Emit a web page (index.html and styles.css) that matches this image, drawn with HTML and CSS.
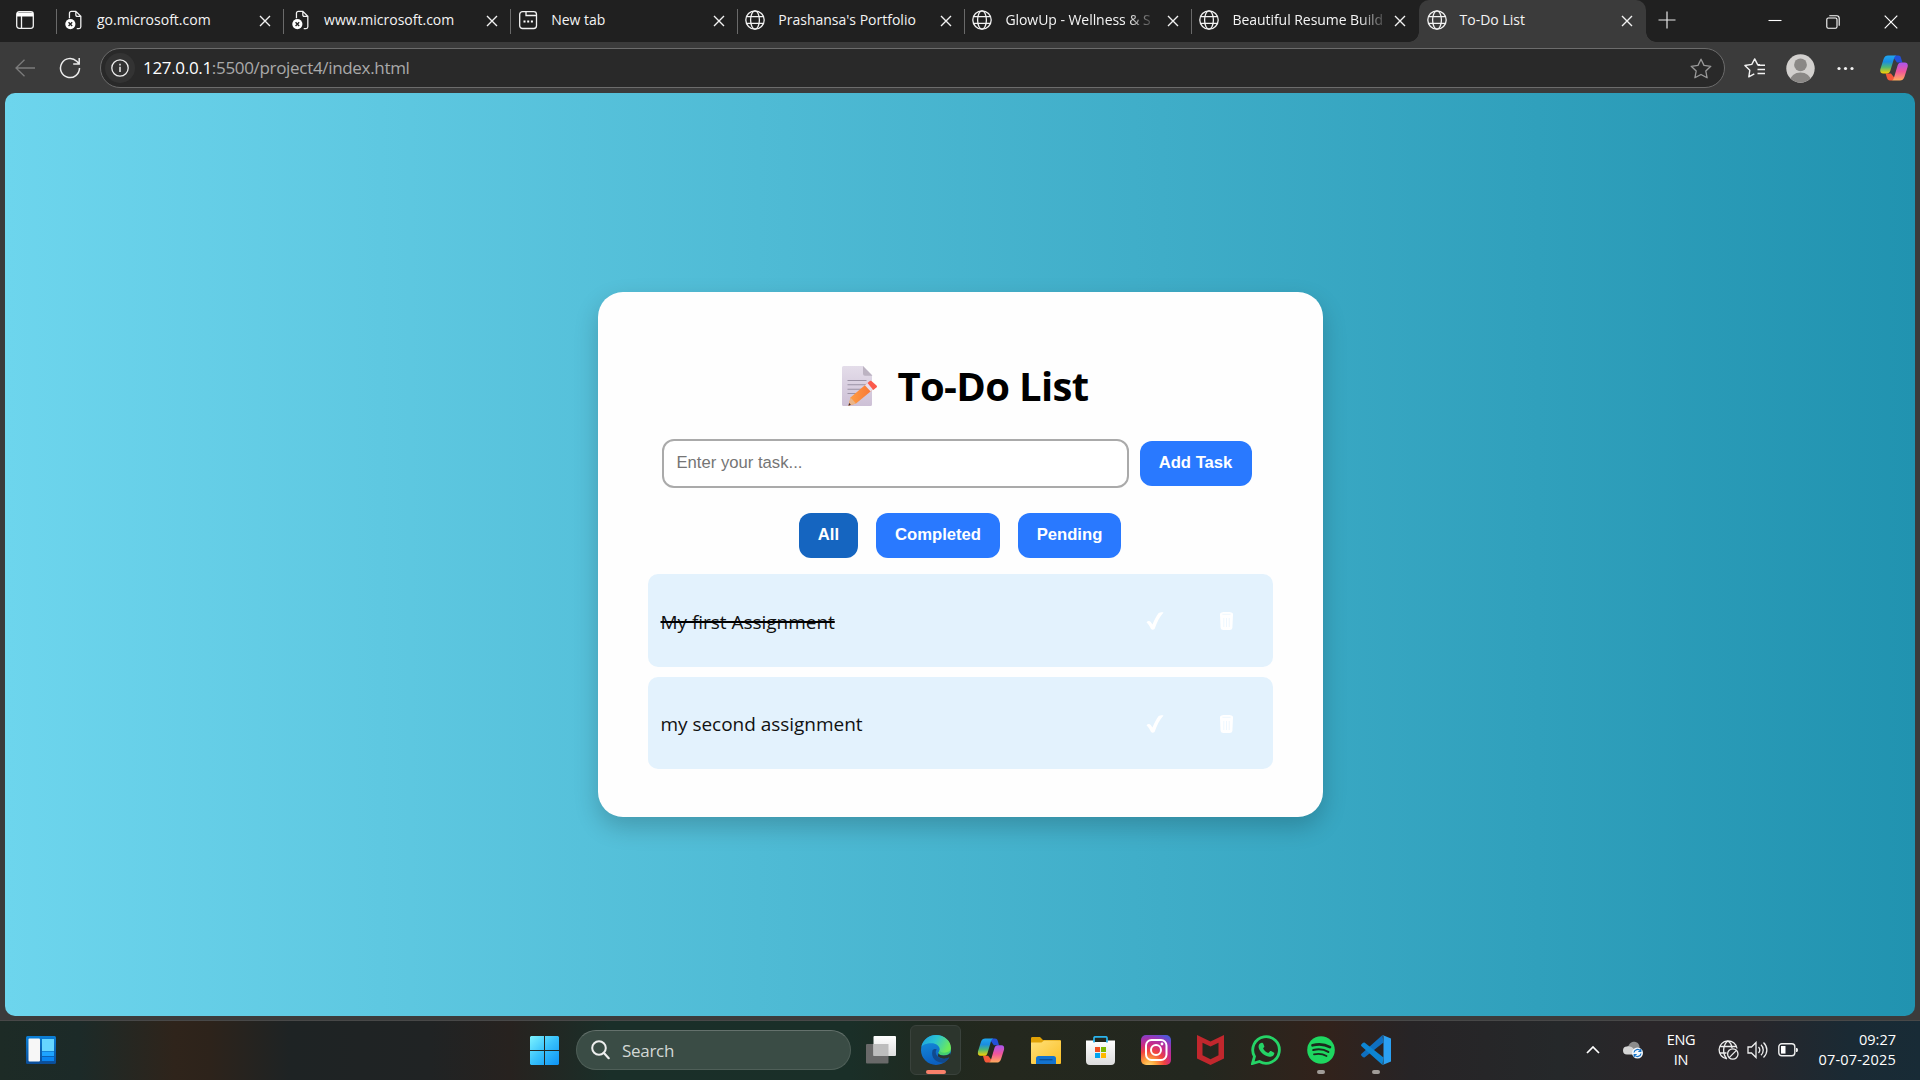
FILE: index.html
```html
<!DOCTYPE html>
<html lang="en">
<head>
<meta charset="utf-8">
<title>To-Do List</title>
<link rel="stylesheet" href="styles.css">
</head>
<body>
<svg class="defs" width="0" height="0" aria-hidden="true">
  <defs>
    <linearGradient id="cpA" x1="0" y1="0" x2="0" y2="1"><stop offset="0" stop-color="#1fa6f0"/><stop offset=".35" stop-color="#1b8de0"/><stop offset=".65" stop-color="#4fb873"/><stop offset="1" stop-color="#ffd000"/></linearGradient>
    <linearGradient id="cpB" x1="0" y1="0" x2="0" y2="1"><stop offset="0" stop-color="#a855f0"/><stop offset=".5" stop-color="#f0559a"/><stop offset="1" stop-color="#ffab5c"/></linearGradient>
    <linearGradient id="edA" x1="0" y1="0" x2="1" y2=".4"><stop offset="0" stop-color="#1b9de2"/><stop offset=".5" stop-color="#2bc3d2"/><stop offset="1" stop-color="#6bea5a"/></linearGradient>
    <linearGradient id="edB" x1="0" y1="0" x2=".3" y2="1"><stop offset="0" stop-color="#1795e0"/><stop offset="1" stop-color="#0b5fc0"/></linearGradient>
    <linearGradient id="winG" x1="0" y1="0" x2="1" y2="1"><stop offset="0" stop-color="#7df3ff"/><stop offset=".5" stop-color="#37c0fb"/><stop offset="1" stop-color="#0d92f4"/></linearGradient>
    <linearGradient id="foldG" x1="0" y1="0" x2="1" y2="1"><stop offset="0" stop-color="#ffe07a"/><stop offset="1" stop-color="#fbbf24"/></linearGradient>
    <linearGradient id="storeG" x1="0" y1="0" x2="0" y2="1"><stop offset="0" stop-color="#fff"/><stop offset="1" stop-color="#dcdcdc"/></linearGradient>
    <radialGradient id="igG" cx=".27" cy="1.05" r="1.15"><stop offset="0" stop-color="#ffdc7a"/><stop offset=".2" stop-color="#fda63d"/><stop offset=".45" stop-color="#f0433f"/><stop offset=".65" stop-color="#cb2a86"/><stop offset=".85" stop-color="#9b36b7"/><stop offset="1" stop-color="#5156d8"/></radialGradient>
    <linearGradient id="tvG" x1="0" y1="0" x2="0" y2="1"><stop offset="0" stop-color="#fff"/><stop offset="1" stop-color="#dedede"/></linearGradient>
    <linearGradient id="wgG" x1="0" y1="0" x2="0" y2="1"><stop offset="0" stop-color="#0b7fd6"/><stop offset="1" stop-color="#0b4d98"/></linearGradient>
    <linearGradient id="penG" x1="0" y1="0" x2="1" y2="0"><stop offset="0" stop-color="#ffa043"/><stop offset="1" stop-color="#f77336"/></linearGradient>
    <linearGradient id="pageG" x1="0" y1="0" x2="0" y2="1"><stop offset="0" stop-color="#e4ddea"/><stop offset="1" stop-color="#cdc0d6"/></linearGradient>
    <symbol id="globe" viewBox="0 0 20 20"><g fill="none" stroke="#f2f2f2" stroke-width="1.3"><circle cx="10" cy="10" r="9.2"/><ellipse cx="10" cy="10" rx="4.4" ry="9.2"/><path d="M1.7 6.6h16.6M1.7 13.4h16.6"/></g></symbol>
    <symbol id="close" viewBox="0 0 12 12"><path d="M1 1l10 10M11 1L1 11" stroke="#f2f2f2" stroke-width="1.4" fill="none"/></symbol>
    <symbol id="badpage" viewBox="0 0 20 22"><path d="M5 9V3.5A2 2 0 0 1 7 1.5h5l5.5 5.5v11.500a2 2 0 0 1-2 2h-2.500M12 1.500v4a1.500 1.500 0 0 0 1.500 1.500h4" fill="none" stroke="#f2f2f2" stroke-width="1.400"/><circle cx="6" cy="15.500" r="5.600" fill="#fff"/><path d="M4 13.500l4 4M8 13.500l-4 4" stroke="#222" stroke-width="1.500"/></symbol>
    <symbol id="copilot" viewBox="0 0 28 26"><path d="M15 .5h3.200c1.500 0 2.300.8 2.800 2.400L22.400 7.500H17L13 2z" fill="#2350d8"/><path d="M12 25.500H9.800c-1.500 0-2.300-.8-2.800-2.400L5.600 18.500H11l4 5z" fill="#f4593a"/><path d="M8 .5h8.500c-1.300.3-2 1.300-2.500 3l-3.600 12c-.6 2-1.800 3-3.600 3H3.200C.8 18.500-.3 16.500.4 14L3.600 4C4.400 1.500 6 .5 8 .5z" fill="url(#cpA)"/><path d="M20 25.500h-8.500c1.300-.3 2-1.300 2.500-3l3.600-12c.6-2 1.800-3 3.600-3h3.600c2.400 0 3.500 2 2.800 4.500l-3.200 10c-.8 2.500-2.400 3.500-4.400 3.500z" fill="url(#cpB)"/></symbol>
    <symbol id="check" viewBox="0 0 18 18"><path d="M.5 10.200c1.200-1.300 3.200-1.500 4.200-.2l1.800 2.600C8 8.500 10.300 3.800 12.700.9c1.500-.9 3.600-.9 4.800-.3C13.500 5 11 10.500 8.800 16.500c-.8 1.500-3 1.600-3.900.2C3.800 14.500 2.400 11.800.5 10.200z" fill="#fff"/></symbol>
    <symbol id="trash" viewBox="0 0 13 18"><path d="M0 2.500C0 .6 2 0 6.500 0S13 .6 13 2.500L12.400 15.500c-.1 1.700-1.300 2.500-2.900 2.500h-6C1.900 18 .7 17.200.6 15.500z" fill="#fff"/><path d="M2.500 2.300h8M3.800 6v9M6.500 6v9M9.200 6v9" stroke="#e3f2fd" stroke-width=".6" fill="none"/></symbol>
  </defs>
</svg>
<div class="screen">
  <header class="tab-strip">
    <div class="tab-actions"><svg width="18" height="18" viewBox="0 0 18 18"><rect x=".7" y=".7" width="16.600" height="16.600" rx="2.500" fill="none" stroke="#f2f2f2" stroke-width="1.300"/><path d="M1 1.500h16v4H1z" fill="#fff"/><path d="M5.500 5v12" stroke="#f2f2f2" stroke-width="1.300"/></svg></div>
    <div class="tab"><svg class="fav" viewBox="0 0 20 22"><use href="#badpage"/></svg><span class="label">go.microsoft.com</span><svg class="x"><use href="#close"/></svg></div>
    <div class="tab"><svg class="fav" viewBox="0 0 20 22"><use href="#badpage"/></svg><span class="label">www.microsoft.com</span><svg class="x"><use href="#close"/></svg></div>
    <div class="tab"><svg class="fav" viewBox="0 0 20 20"><rect x="1.700" y="1.700" width="16.800" height="16.800" rx="2.800" fill="none" stroke="#f2f2f2" stroke-width="1.300"/><path d="M8 2v3.500h10.500" fill="none" stroke="#f2f2f2" stroke-width="1.300"/><path d="M5.500 11.500h2M9.200 11.500h2M12.900 11.500h2" stroke="#fff" stroke-width="1.800"/></svg><span class="label">New tab</span><svg class="x"><use href="#close"/></svg></div>
    <div class="tab"><svg class="fav"><use href="#globe"/></svg><span class="label">Prashansa's Portfolio</span><svg class="x"><use href="#close"/></svg></div>
    <div class="tab"><svg class="fav"><use href="#globe"/></svg><span class="label fade">GlowUp - Wellness &amp; S</span><svg class="x"><use href="#close"/></svg></div>
    <div class="tab"><svg class="fav"><use href="#globe"/></svg><span class="label fade">Beautiful Resume Build</span><svg class="x"><use href="#close"/></svg></div>
    <div class="tab active"><svg class="fav"><use href="#globe"/></svg><span class="label">To-Do List</span><svg class="x"><use href="#close"/></svg></div>
    <svg class="new-tab" viewBox="0 0 18 18"><path d="M9 .5v17M.5 9h17" stroke="#e8e8e8" stroke-width="1.200"/></svg>
    <div class="window-buttons">
      <svg width="14" height="14" viewBox="0 0 14 14"><path d="M.5 5.500h13" stroke="#fff" stroke-width="1.100"/></svg>
      <svg width="14" height="14" viewBox="0 0 14 14"><g fill="none" stroke="#fff" stroke-width="1.100"><rect x=".8" y="3" width="10.200" height="10.200" rx="1.500"/><path d="M3.300.8h7.500a2.400 2.400 0 0 1 2.400 2.400v7.500"/></g></svg>
      <svg width="14" height="14" viewBox="0 0 14 14"><path d="M.7.7l12.600 12.600M13.300.7L.7 13.300" stroke="#fff" stroke-width="1.200"/></svg>
    </div>
  </header>

  <nav class="toolbar">
    <svg class="back" width="20" height="18" viewBox="0 0 20 18"><path d="M9.500.8L1 9l8.500 8.200M1 9h19" fill="none" stroke="#7c7c7c" stroke-width="1.300"/></svg>
    <svg class="reload" width="22" height="22" viewBox="0 0 22 22"><path d="M20.500 11a9.500 9.500 0 1 1-2.800-6.700L20 6.500M20.200 1v6h-6" fill="none" stroke="#ececec" stroke-width="1.500"/></svg>
    <div class="address">
      <span class="info"><svg width="18" height="18" viewBox="0 0 18 18"><circle cx="9" cy="9" r="8.200" fill="none" stroke="#eee" stroke-width="1.300"/><path d="M9 7.800V13M9 4.800v1.700" stroke="#eee" stroke-width="1.500"/></svg></span>
      <span class="url"><b>127.0.0.1</b>:5500/project4/index.html</span>
      <svg class="star" width="22" height="21" viewBox="0 0 22 21"><path d="M11 1.200l3 6.200 6.800.9-5 4.700 1.300 6.800-6.100-3.300-6.100 3.300 1.300-6.800-5-4.700 6.800-.9z" fill="none" stroke="#9a9a9a" stroke-width="1.300" stroke-linejoin="round"/></svg>
    </div>
    <div class="tools">
      <svg width="22" height="20" viewBox="0 0 22 20"><path d="M16 6.700l-2.500-.3L10.700.9 7.800 6.400.9 7.500l4.900 4.800-1 6.600 5.500-3" fill="none" stroke="#f2f2f2" stroke-width="1.400" stroke-linejoin="round"/><path d="M13.500 9.800H21M13.500 14H21M13.500 18H21" stroke="#f2f2f2" stroke-width="1.400" transform="translate(0 -2.500)"/></svg>
      <svg class="avatar" width="29" height="29" viewBox="0 0 29 29"><clipPath id="avc"><circle cx="14.500" cy="14.500" r="14"/></clipPath><circle cx="14.500" cy="14.500" r="14.200" fill="#d2d0ce"/><circle cx="14.500" cy="10.800" r="6.400" fill="#8a8886"/><ellipse cx="14.500" cy="27" rx="10.500" ry="8.500" fill="#8a8886" clip-path="url(#avc)"/></svg>
      <svg class="more" width="17" height="5" viewBox="0 0 17 5"><g fill="#f2f2f2"><circle cx="2" cy="2.500" r="1.600"/><circle cx="8.500" cy="2.500" r="1.600"/><circle cx="15" cy="2.500" r="1.600"/></g></svg>
      <svg class="assistant" width="28" height="26"><use href="#copilot"/></svg>
    </div>
  </nav>

  <main class="page">
    <section class="card">
      <h1 class="title"><svg width="36" height="40" viewBox="0 0 36 40"><path d="M1.500 0H21l9 9v29.500a1.500 1.500 0 0 1-1.500 1.500h-27A1.500 1.500 0 0 1 0 38.500v-37A1.500 1.500 0 0 1 1.500 0z" fill="url(#pageG)"/><path d="M21 0l9.500 9.700H23a2 2 0 0 1-2-2z" fill="#bcb3c2"/><path d="M5.500 14.500h19M5.500 18.800h19M5.500 23.200h15M5.500 27.500h12" stroke="#9b92a5" stroke-width="1.100"/><path d="M6.500 39.700l2-8.200L25.500 17l5.800 6.200L14 37.500z" fill="url(#penG)"/><path d="M6.500 39.700l2-8.200 5.500 6z" fill="#eab489"/><path d="M6.500 39.700l.6-2.600 1.800 1.700z" fill="#402a32"/><path d="M22.900 19.200l3.100-2.600 5.800 6.200-3.200 2.700z" fill="#e8dfee"/><path d="M25.500 17l2.300-1.900c.8-.5 1.500-.4 2.200.3l4.500 4c.7.700.6 1.500-.1 2.200l-3.100 2.400z" fill="#fb5a4c"/></svg><span>To-Do List</span></h1>
      <div class="entry"><input class="field" type="text" placeholder="Enter your task..."><button class="btn add">Add Task</button></div>
      <div class="filters"><button class="btn selected all">All</button><button class="btn completed">Completed</button><button class="btn pending">Pending</button></div>
      <ul class="tasks">
        <li class="task first"><span class="name done">My first Assignment</span><button class="act"><svg width="18" height="18"><use href="#check"/></svg></button><button class="act"><svg width="13" height="18"><use href="#trash"/></svg></button></li>
        <li class="task"><span class="name">my second assignment</span><button class="act"><svg width="18" height="18"><use href="#check"/></svg></button><button class="act"><svg width="13" height="18"><use href="#trash"/></svg></button></li>
      </ul>
    </section>
  </main>

  <footer class="taskbar">
    <svg class="widgets" width="30" height="28" viewBox="0 0 30 28"><rect width="30" height="28" rx="1.500" fill="url(#wgG)"/><rect x="2.500" y="2.500" width="11.500" height="23" rx="1" fill="#f7f7f7"/><path d="M16 3h12v12H16z" fill="#66d6ff"/><path d="M16 15.500h12V20H16z" fill="#1ea4ff"/><path d="M16 20.800h12V25H16z" fill="#0a85f0"/></svg>
    <svg class="start" width="29" height="29" viewBox="0 0 29 29"><path d="M1 0h13v14H0V1zM15 0h13l1 1v13H15zM0 15h14v14H1l-1-1zM15 15h14v13l-1 1H15z" fill="url(#winG)"/></svg>
    <div class="search"><svg width="19" height="20" viewBox="0 0 19 20"><circle cx="8" cy="8" r="6.800" fill="none" stroke="#eee" stroke-width="2"/><path d="M12.700 12.800l5 5.400" stroke="#eee" stroke-width="2.200" stroke-linecap="round"/></svg><span>Search</span></div>
    <div class="apps">
      <div class="app"><svg width="30" height="28" viewBox="0 0 30 28"><rect y="8" width="22.500" height="19.500" rx="1" fill="#696969"/><rect x="7.500" width="22.500" height="20" rx="1" fill="url(#tvG)"/><rect x="7.500" y="8" width="15" height="12" fill="#bdbdbd"/></svg></div>
      <div class="app open"><svg width="30" height="30" viewBox="0 0 30 30"><circle cx="15" cy="15" r="15" fill="url(#edB)"/><path d="M.3 12C1.600 5 7.500 0 15 0c8.500 0 15 6 15 13 0 4-3 7-7.500 7-3 0-5-1-5-2.200 0-.8 1.200-1.500 1.200-3.500C18.700 11 15 8.300 10.500 8.300 5 8.300 1.500 10 .3 12z" fill="url(#edA)"/><path d="M11.500 15.500c-2 7 3.500 12.500 11 12.300 3-1.400 5-3.300 6-5.500-4 2.200-9 2-11.800-.8-2.200-2-2.600-5-1-7.200-1.400-.7-3.500-.5-4.200 1.200z" fill="#114a8e"/><path d="M29.900 15c-.3 3-2.800 5.500-7.400 5.500-3 0-5-1.200-5-2.500 0-.8 1.200-1.500 1.200-3.500 0 4 7 4.500 11.200.5z" fill="#44d070"/><path d="M17.500 18c0 1.500 2 2.500 5 2.500 3 0 5.200-.7 6.700-2.500l.8 4-1.500.3c-4 2.200-8.800 1.800-11.600-1z" fill="#2c352d"/></svg></div>
      <div class="app"><svg width="28" height="25" viewBox="0 0 28 26"><use href="#copilot"/></svg></div>
      <div class="app"><svg width="30" height="27" viewBox="0 0 30 27"><path d="M0 1.500C0 .5.500 0 1.500 0H9l3 3h16.500c1 0 1.500.5 1.500 1.500V10H0z" fill="#e0a106"/><path d="M0 5.500h10.500L13 3.500h16c.7 0 1 .3 1 1V26a1 1 0 0 1-1 1H1a1 1 0 0 1-1-1z" fill="url(#foldG)"/><path d="M5 27v-5.500a2.500 2.500 0 0 1 2.500-2.500h15a2.500 2.500 0 0 1 2.500 2.500V27z" fill="#1373cf"/><path d="M8.500 22.700h13" stroke="#0b4f95" stroke-width="1.300"/></svg></div>
      <div class="app"><svg width="29" height="29" viewBox="0 0 29 29"><path d="M8 6V2a1.200 1.200 0 0 1 1.200-1.200h10.600A1.200 1.200 0 0 1 21 2v4" fill="none" stroke="#2bb5ee" stroke-width="1.700"/><path d="M0 4.500h8v1.500h13V4.500h8V25a4 4 0 0 1-4 4H4a4 4 0 0 1-4-4z" fill="url(#storeG)"/><path d="M8 4v2.500M21 4v2.500" stroke="#2bb5ee" stroke-width="1.700"/><path d="M9 11h5v5H9z" fill="#f25022"/><path d="M15 11h5v5h-5z" fill="#7fba00"/><path d="M9 17h5v5H9z" fill="#00a4ef"/><path d="M15 17h5v5h-5z" fill="#ffb900"/></svg></div>
      <div class="app"><svg width="30" height="30" viewBox="0 0 30 30"><rect width="30" height="30" rx="5" fill="url(#igG)"/><g fill="none" stroke="#fff" stroke-width="2"><rect x="5" y="5" width="20.500" height="20" rx="5.500"/><circle cx="15" cy="15" r="5"/></g><circle cx="21" cy="9" r="1.400" fill="#fff"/></svg></div>
      <div class="app"><svg width="27" height="30" viewBox="0 0 27 30"><path d="M0 0l13.500 6.500L27 0v23.500L13.500 30 0 23.500zM5.500 7.800v12.400l8 4 8-4V7.800l-8 3.800z" fill="#c1272d" fill-rule="evenodd"/></svg></div>
      <div class="app"><svg width="30" height="30" viewBox="0 0 30 30"><path d="M1.500 28.500l2-7A13.300 13.300 0 1 1 8.500 26.500z" fill="none" stroke="#25d366" stroke-width="2.800"/><path d="M10.800 7.800c.7-.1 1.100 0 1.400.8l1.100 2.700c.2.600-.3 1.200-1.200 2.100 1.200 2.300 2.800 3.700 5.200 4.700l1.500-1.700c.4-.5.800-.5 1.300-.3l2.600 1.300c.6.300.7.500.6 1.200-.4 2.300-2.700 3.500-5 3.200-5.300-.8-10.200-5.600-10.700-9.600-.2-2 .9-4.300 3.200-4.400z" fill="#25d366"/></svg></div>
      <div class="app running"><svg width="28" height="28" viewBox="0 0 28 28"><circle cx="14" cy="14" r="13.800" fill="#1ed760"/><g fill="none" stroke="#1b2a1d" stroke-linecap="round"><path d="M5.500 9.300c6-1.600 12.500-1 17.500 1.900" stroke-width="2.600"/><path d="M6.300 14c5-1.300 10.500-.8 15 1.900" stroke-width="2.200"/><path d="M7 18.400c4.300-1 8.700-.6 12.500 1.700" stroke-width="1.800"/></g></svg></div>
      <div class="app running"><svg width="30" height="30" viewBox="0 0 30 30"><path d="M22.500 7.500L3.500 22.500l-1.500-.2L.3 20.500c-.4-.6-.4-1.200.2-1.700L21.500 0z" fill="#0f6fc0"/><path d="M22.500 22.500L3.500 7.500 2 7.700.3 9.500c-.4.600-.4 1.200.2 1.700L21.500 30z" fill="#0d85d3"/><path d="M21.500 0L30 3.500v23L21.500 30c-.3-.2 1-.5 1-1.500v-27c0-1-1.300-1.300-1-1.500z" fill="#2ba0f2"/></svg></div>
    </div>
    <div class="tray">
      <svg class="chev" width="14" height="8" viewBox="0 0 14 8"><path d="M1 7l6-6 6 6" fill="none" stroke="#fff" stroke-width="1.700"/></svg>
      <svg class="cloud" width="20" height="18" viewBox="0 0 20 18"><path d="M5 6C6 2 9 .5 11.500.7 15 1 17 4 16.500 7.500L8 10z" fill="#8c8c8c"/><path d="M4 13.500a4 4 0 0 1 0-8c2.500-.6 5.500.7 7 3l3 5z" fill="#d5d5d5"/><circle cx="14.500" cy="12" r="5.500" fill="#f2f7fc"/><path d="M11 11.500a3.600 3.600 0 0 1 6.500-1.500M18 12.500a3.600 3.600 0 0 1-6.500 1.500M17.800 8v2.500h-2.500M11.200 16v-2.500h2.500" fill="none" stroke="#1673c8" stroke-width="1.200"/></svg>
      <div class="lang"><span>ENG</span><span>IN</span></div>
      <svg class="net" width="21" height="20" viewBox="0 0 21 20"><g fill="none" stroke="#eee" stroke-width="1.300"><path d="M9 18.800A9 9 0 1 1 19 8.500M8.500 18.500C4.500 14 4.500 5 9.800.9c3 2 4 4.600 4.200 7.200M1.700 6.500h16.500M1.500 13h7"/><circle cx="14.800" cy="14" r="5.200"/><path d="M11.200 17.600l7.200-7.200"/></g></svg>
      <svg class="vol" width="21" height="18" viewBox="0 0 21 18"><g fill="none" stroke="#eee" stroke-width="1.300"><path d="M1 6h3.500L9 1.500v15L4.500 12H1z"/><path d="M11.500 6c1.600 1.800 1.600 4.200 0 6M14 3.800c3 3 3 7.400 0 10.400M16.500 1.500c4.500 4.500 4.500 10.500 0 15"/></g></svg>
      <svg class="bat" width="20" height="14" viewBox="0 0 20 14"><rect x=".8" y=".8" width="16" height="12" rx="3" fill="none" stroke="#eee" stroke-width="1.400"/><path d="M3 3h4.500v7.600H3z" fill="#fff"/><path d="M18 5h.8c.6 0 1.200.8 1.200 2s-.6 2-1.200 2H18z" fill="#eee"/></svg>
      <div class="clock"><span>09:27</span><span class="date">07-07-2025</span></div>
    </div>
  </footer>
</div>
</body>
</html>
```
FILE: styles.css
```css
* { box-sizing: border-box; }
body { margin: 0; background: #3b3b3b; font-family: "Open Sans", "Noto Sans", sans-serif; }
svg { display: block; flex: none; }
.defs { position: absolute; }
.screen { width: 1920px; height: 1080px; display: flex; flex-direction: column; overflow: hidden; }

/* tab strip */
.tab-strip { height: 42px; display: flex; background: #202020; flex: none; }
.tab-actions { width: 56px; padding: 11px 0 0 16px; }
.tab { width: 227.100px; height: 42px; display: flex; align-items: center; padding: 0 12.500px 2px 7px; position: relative; }
.tab::before { content: ""; width: 1px; height: 25px; background: #6a6a6a; margin: 3px 0 0 -7px; }
.tab .fav { width: 20px; height: 20px; margin-left: 7px; }
.tab .label { margin: 0 auto 0 13px; font-size: 14px; line-height: 20px; color: #f4f4f4; white-space: nowrap; }
.tab .label.fade { letter-spacing: -.050px; -webkit-mask-image: linear-gradient(to right, #000 84%, transparent 104%); mask-image: linear-gradient(to right, #000 84%, transparent 104%); }
.tab .x { width: 12px; height: 12px; margin: 2px 0 0 4px; }
.tab.active { background: #3b3b3b; border-radius: 10px 10px 0 0; }
.tab.active::before { background: none; }
.tab.active::after { content: ""; position: absolute; left: -10px; right: -10px; bottom: 0; height: 10px; background: radial-gradient(circle at 0 0, transparent 9.500px, #3b3b3b 10px) left / 10px 10px no-repeat, radial-gradient(circle at 100% 0, transparent 9.500px, #3b3b3b 10px) right / 10px 10px no-repeat; }
.new-tab { width: 18px; height: 18px; margin: 11px 0 0 12px; }
.window-buttons { margin-left: auto; display: flex; gap: 44px; padding: 15px 22px 0 0; }

/* toolbar */
.toolbar { height: 51px; display: flex; align-items: center; flex: none; background: #3b3b3b; padding-top: 1px; }
.back { margin-left: 15px; }
.reload { margin-left: 24px; }
.address { width: 1625px; height: 40px; margin-left: 19px; border: 1px solid #6c6c6c; border-radius: 20px; background: #292929; display: flex; align-items: center; padding: 0 12px 0 4px; }
.info { width: 30px; height: 30px; border-radius: 50%; background: #333; display: grid; place-items: center; }
.url { flex: 1; margin: 0 0 1px 8px; font-size: 17px; letter-spacing: -.320px; color: #a9a9a9; }
.url b { font-weight: 400; color: #fff; }
.tools { flex: 1; display: flex; align-items: center; padding-left: 19px; }
.avatar { margin-left: 20px; }
.more { margin-left: 22px; }
.assistant { margin-left: 26px; }

/* web page */
.page { height: 923px; margin: 0 5px; border-radius: 10px; flex: none; background: linear-gradient(to right, #6dd5ed, #2193b0); display: flex; align-items: center; justify-content: center; }
.card { width: 725px; height: 525px; padding: 70px 50px 0; border-radius: 25px; background: #fefefe; box-shadow: 0 10px 25px rgba(0, 0, 0, .2); }
.title { margin: 0; height: 54px; display: flex; align-items: center; justify-content: center; gap: 19px; padding-left: 11px; font-size: 40px; line-height: 54px; letter-spacing: -.650px; color: #000; }
.title svg { margin-top: -6px; }
.title span { margin-top: -7px; }
.entry { display: flex; align-items: center; gap: 11px; margin: 23px 0 0 14px; }
.field { width: 467px; height: 49px; padding: 0 13px 2px; border: 2px solid #aaa; border-radius: 12px; font: 16.670px "Liberation Sans", Arial, sans-serif; background: #fff; }
.field::placeholder { color: #757575; }
.btn { height: 45px; padding: 0 0 1px; border: 0; border-radius: 12px; background: #2979ff; color: #fff; font: bold 16.670px "Liberation Sans", Arial, sans-serif; }
.btn.selected { background: #1565c0; }
.add { width: 112px; }
.filters { display: flex; justify-content: center; gap: 18px; margin-top: 25px; }
.all { width: 59px; }
.completed { width: 124px; }
.pending { width: 103px; }
.tasks { list-style: none; margin: 16px 0 0; padding: 0; display: grid; gap: 10px; }
.task { height: 92px; display: flex; align-items: center; border-radius: 10px; background: #e3f2fd; padding: 0 10px 0 13px; }
.task.first { height: 93px; }
.name { flex: 1; font-size: 19px; line-height: 26px; letter-spacing: -.030px; color: #111; margin-top: 2px; }
.done { text-decoration: line-through 2px #000; }
.act { width: 72px; height: 45px; padding: 1px 0 0; border: 0; background: none; display: grid; place-items: center; }

/* taskbar */
.taskbar { height: 60px; margin-top: auto; flex: none; display: flex; align-items: center; border-top: 1px solid #484848; padding-bottom: 1px;
  background: linear-gradient(to right, #1d2b26 0, #1c2a28 80px, #2f241b 175px, #2d231b 210px, #1e2324 290px, #202324 430px, #27221f 510px, #1a2f29 610px, #1a2f28 850px, #20291f 940px, #24281e 1000px, #23271f 1200px, #32221b 1325px, #272426 1410px, #25282a 1560px, #2a2629 1650px, #28262a 1750px, #1a2a34 1850px, #182b36 1920px); }
.widgets { margin-left: 26px; }
.start { margin-left: 474px; }
.search { width: 275px; height: 40px; margin: 0 2px 0 17px; border: 1px solid #4f5f58; border-top-color: #64716c; border-radius: 20px; background: #3a4c45; display: flex; align-items: center; gap: 12px; padding-left: 14px; font-size: 17px; letter-spacing: -.300px; color: #d3d8d5; }
.apps { display: flex; }
.app { width: 55px; height: 50px; display: grid; place-items: center; position: relative; }
.app.open::before { content: ""; position: absolute; inset: 0 2px; border: 1px solid #3a423c; border-radius: 6px; background: #2c352d; }
.app svg { position: relative; }
.app.open::after, .app.running::after { content: ""; position: absolute; bottom: 1px; left: 50%; width: 8px; height: 4px; margin-left: -4px; border-radius: 2px; background: #a19c98; }
.app.open::after { width: 20px; margin-left: -10px; background: #f8806a; }
.tray { margin-left: auto; display: flex; align-items: center; padding-right: 24px; color: #fff; font-size: 14.500px; line-height: 20px; letter-spacing: -.300px; }
.cloud { margin-left: 23px; }
.lang { width: 40px; margin-left: 18px; display: flex; flex-direction: column; text-align: center; }
.net { margin-left: 17px; }
.vol { margin-left: 8px; }
.bat { margin-left: 10px; }
.clock { width: 98px; display: flex; flex-direction: column; text-align: right; letter-spacing: 0; }
.date { letter-spacing: .180px; }
```
